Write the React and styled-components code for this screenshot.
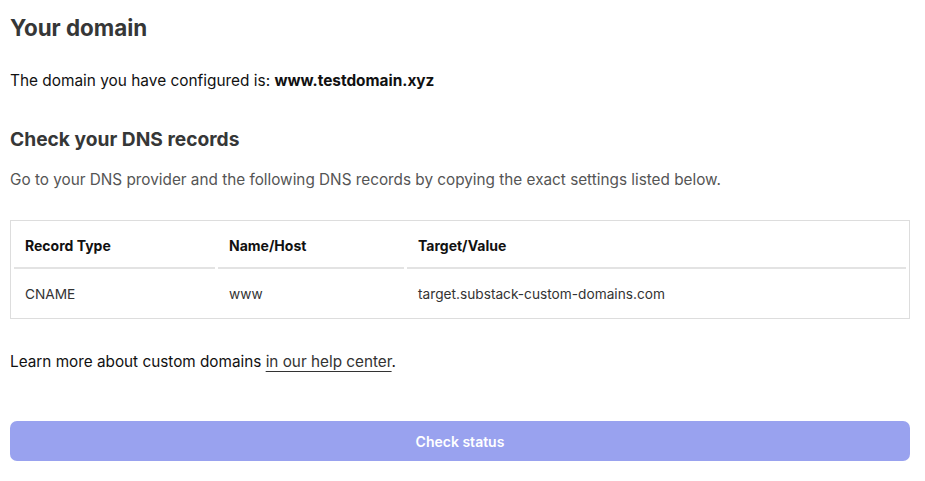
import React from "react";
import styled, { createGlobalStyle } from "styled-components";

const GlobalStyle = createGlobalStyle`
  body {
    margin: 0;
    background: #ffffff;
    font-family: Inter, "Noto Sans", sans-serif;
    color: #111;
  }
`;

const records = [
    { type: "CNAME", host: "www", value: "target.substack-custom-domains.com" },
];

function App() {
    return (
        <>
            <GlobalStyle />
            <Page>
                <Title>Your domain</Title>
                <Text>
                    The domain you have configured is: <strong>www.testdomain.xyz</strong>
                </Text>
                <SubTitle>Check your DNS records</SubTitle>
                <Muted>
                    Go to your DNS provider and the following DNS records by copying the exact settings listed below.
                </Muted>
                <Table>
                    <colgroup>
                        <col style={{ width: "201px" }} />
                        <col style={{ width: "186px" }} />
                        <col />
                    </colgroup>
                    <thead>
                        <tr>
                            <Th>Record Type</Th>
                            <Th>Name/Host</Th>
                            <Th>Target/Value</Th>
                        </tr>
                    </thead>
                    <tbody>
                        {records.map((r) => (
                            <tr key={r.type}>
                                <Td>{r.type}</Td>
                                <Td>{r.host}</Td>
                                <Td>{r.value}</Td>
                            </tr>
                        ))}
                    </tbody>
                </Table>
                <HelpText>
                    Learn more about custom domains <HelpLink href="#">in our help center</HelpLink>.
                </HelpText>
                <StatusButton disabled>Check status</StatusButton>
            </Page>
        </>
    );
}

const Page = styled.div`
    padding: 14px 15px 20px 10px;
    display: flex;
    flex-direction: column;
`;

const Title = styled.h1`
    margin: 0;
    font-size: 22.4px;
    line-height: 28px;
    font-weight: 700;
    color: #363737;
`;

const Text = styled.p`
    margin: 28px 0 0;
    font-size: 15.4px;
    line-height: 22px;
    color: #111;

    strong {
        font-weight: 700;
    }
`;

const SubTitle = styled.h2`
    margin: 35px 0 0;
    font-size: 19.2px;
    line-height: 24px;
    font-weight: 700;
    color: #363737;
`;

const Muted = styled.p`
    margin: 18px 0 0;
    font-size: 15.3px;
    line-height: 22px;
    color: #555;
`;

const Table = styled.table`
    margin-top: 29px;
    width: 900px;
    table-layout: fixed;
    border: 1px solid #dddddd;
    border-spacing: 3px;
    font-size: 14px;
    text-align: left;
`;

const Th = styled.th`
    height: 43px;
    padding: 0 11px;
    font-weight: 700;
    color: #111;
    border-bottom: 2px solid #e3e3e3;
`;

const Td = styled.td`
    height: 43px;
    padding: 0 11px;
    font-size: 13.7px;
    color: #333;
`;

const HelpText = styled.p`
    margin: 32px 0 0;
    font-size: 15.3px;
    line-height: 22px;
    color: #111;
`;

const HelpLink = styled.a`
    color: #333;
    text-decoration: underline;
    text-underline-offset: 4px;
    text-decoration-thickness: 1px;
`;

const StatusButton = styled.button`
    margin-top: 48px;
    width: 900px;
    height: 40px;
    border: none;
    border-radius: 7px;
    background: #99a2ef;
    color: #ffffff;
    font-family: Inter, "Noto Sans", sans-serif;
    font-size: 14px;
    font-weight: 600;
    cursor: default;
`;

export default App;
